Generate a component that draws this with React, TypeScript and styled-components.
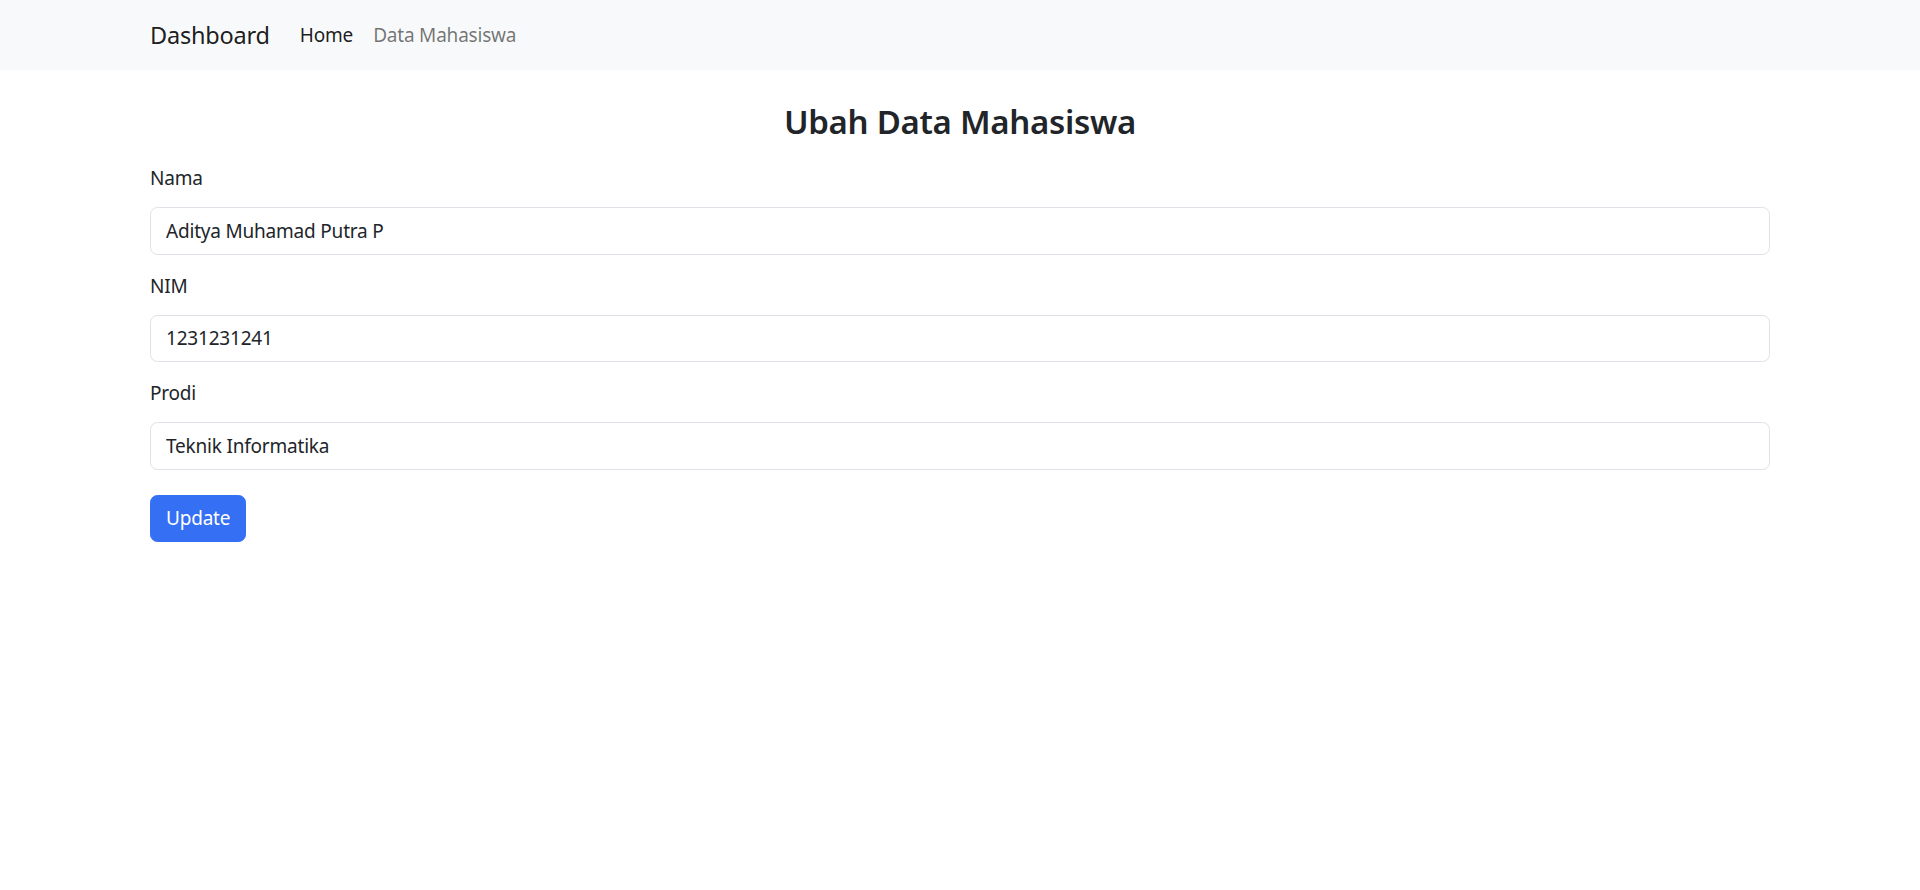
import * as React from "react";
import styled, { createGlobalStyle } from "styled-components";

const GlobalStyle = createGlobalStyle`
    html, body {
        margin: 0;
        padding: 0;
        background: #ffffff;
    }
    body {
        font-family: "Noto Sans", "Open Sans", sans-serif;
        font-size: 19px;
        letter-spacing: -0.2px;
        line-height: 30px;
        color: #212529;
    }
    * {
        box-sizing: border-box;
    }
`;

const Navbar = styled.nav`
    background: #f8f9fa;
    height: 70px;
    display: flex;
    align-items: center;
`;

const Container = styled.div`
    width: 1650px;
    margin: 0 auto;
    padding: 0 15px;
`;

const NavInner = styled(Container)`
    display: flex;
    align-items: center;
`;

const Brand = styled.a`
    font-size: 23.5px;
    line-height: 37px;
    color: rgba(0, 0, 0, 0.9);
    margin-right: 20px;
    padding: 6px 0;
    text-decoration: none;
`;

const NavList = styled.div`
    display: flex;
`;

const NavLink = styled.a<{ $active?: boolean }>`
    padding: 10px;
    text-decoration: none;
    color: ${(p) => (p.$active ? "rgba(0, 0, 0, 0.9)" : "rgba(0, 0, 0, 0.55)")};
`;

const Main = styled(Container)`
    padding-top: 31px;
`;

const Title = styled.h3`
    margin: 0 0 20px;
    text-align: center;
    font-size: 33px;
    font-weight: 600;
    letter-spacing: -0.3px;
    line-height: 42px;
`;

const Field = styled.div`
    margin-bottom: 16px;
`;

const Label = styled.label`
    display: block;
    margin-bottom: 14px;
`;

const Input = styled.input`
    display: block;
    width: 100%;
    height: 47.5px;
    padding: 7.5px 15px;
    font: inherit;
    letter-spacing: inherit;
    color: #212529;
    background: #fff;
    border: 1px solid #dee2e6;
    border-radius: 7.5px;
    outline: none;
`;

const Button = styled.button`
    margin-top: 9px;
    font: inherit;
    letter-spacing: inherit;
    color: #fff;
    background: #356ff4;
    border: 1px solid #356ff4;
    border-radius: 7.5px;
    padding: 7.5px 15px;
    height: 47.5px;
    cursor: pointer;
`;

const fields = [
    { label: "Nama", value: "Aditya Muhamad Putra P" },
    { label: "NIM", value: "1231231241" },
    { label: "Prodi", value: "Teknik Informatika" },
];

export default function App() {
    return (
        <>
            <GlobalStyle />
            <Navbar>
                <NavInner>
                    <Brand href="#">Dashboard</Brand>
                    <NavList>
                        <NavLink href="#" $active>
                            Home
                        </NavLink>
                        <NavLink href="#">Data Mahasiswa</NavLink>
                    </NavList>
                </NavInner>
            </Navbar>
            <Main>
                <Title>Ubah Data Mahasiswa</Title>
                <form onSubmit={(e) => e.preventDefault()}>
                    {fields.map((f) => (
                        <Field key={f.label}>
                            <Label>{f.label}</Label>
                            <Input type="text" defaultValue={f.value} />
                        </Field>
                    ))}
                    <Button type="submit">Update</Button>
                </form>
            </Main>
        </>
    );
}
